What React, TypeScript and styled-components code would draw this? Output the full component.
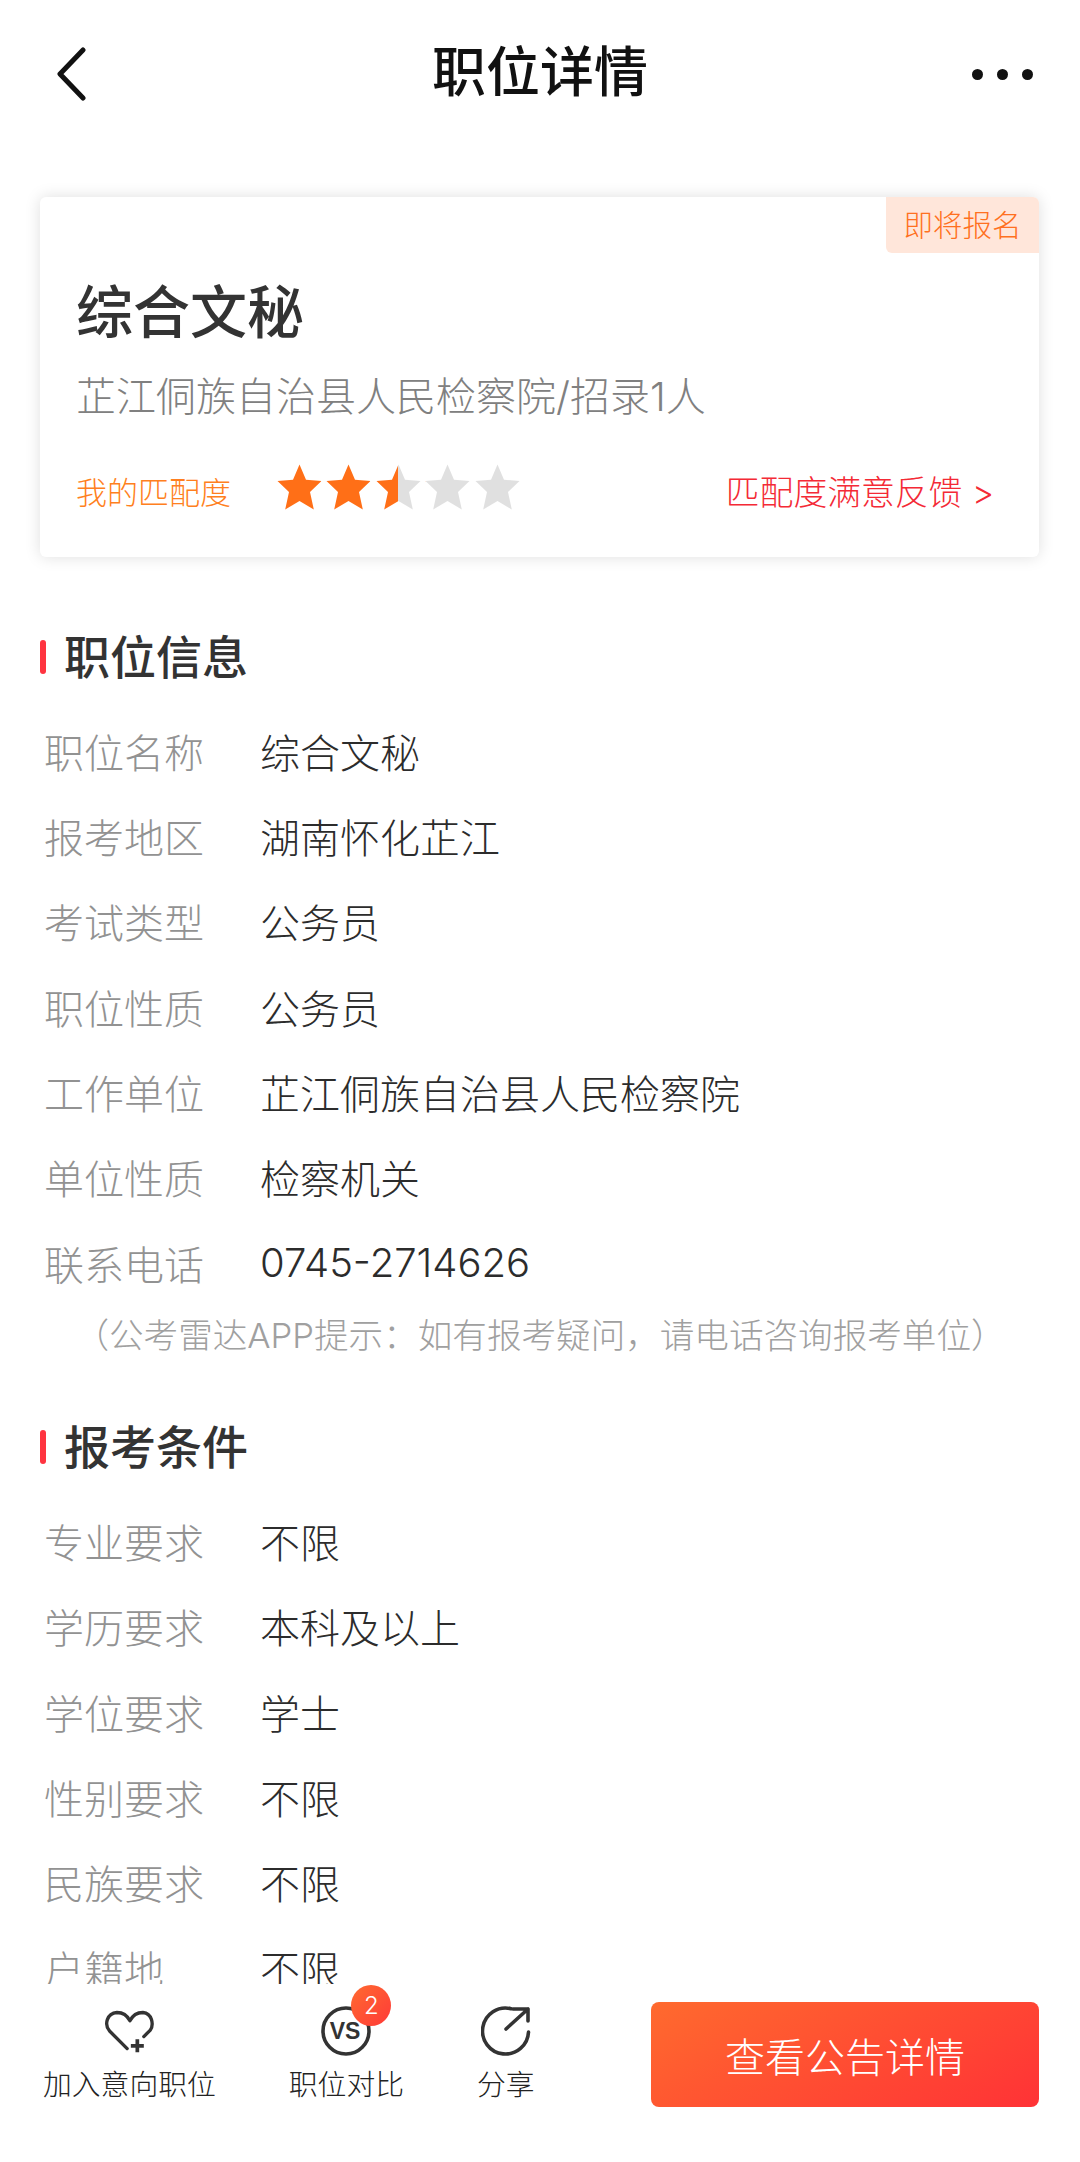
import { FC } from 'react'
import styled, { createGlobalStyle } from 'styled-components'

const FONT = `Inter, "Noto Sans CJK SC", "Noto Sans", sans-serif`

const jobRows = [
  ['职位名称', '综合文秘'],
  ['报考地区', '湖南怀化芷江'],
  ['考试类型', '公务员'],
  ['职位性质', '公务员'],
  ['工作单位', '芷江侗族自治县人民检察院'],
  ['单位性质', '检察机关'],
  ['联系电话', '0745-2714626'],
]

const conditionRows = [
  ['专业要求', '不限'],
  ['学历要求', '本科及以上'],
  ['学位要求', '学士'],
  ['性别要求', '不限'],
  ['民族要求', '不限'],
  ['户籍地', '不限'],
]

const Star: FC<{ id: string; fill: number }> = ({ id, fill }) => (
  <StarIcon viewBox="0 0 45 46">
    <defs>
      <linearGradient id={id} x1="0" x2="1" y1="0" y2="0">
        <stop offset={fill} stopColor="#ff6f17" />
        <stop offset={fill} stopColor="#e0e0e0" />
      </linearGradient>
    </defs>
    <path
      d="M22.5 0.5 L29 15.8 L44.5 17 L33 28 L36.8 45.5 L22.5 37 L8.2 45.5 L12 28 L0.5 17 L16 15.8 Z"
      fill={`url(#${id})`}
    />
  </StarIcon>
)

const InfoList: FC<{ rows: string[][] }> = ({ rows }) => (
  <List>
    {rows.map(([label, value]) => (
      <Row key={label}>
        <RowLabel>{label}</RowLabel>
        <RowValue>{value}</RowValue>
      </Row>
    ))}
  </List>
)

const App: FC = () => (
  <Page>
    <GlobalLayout />
    <Scroller>
      <Nav>
        <NavBack viewBox="0 0 30 54" fill="none">
          <path d="M27 3 L4 27 L27 51" stroke="#111" strokeWidth="5" strokeLinecap="round" strokeLinejoin="round" />
        </NavBack>
        <NavTitle>职位详情</NavTitle>
        <NavMore>
          <Dot />
          <Dot />
          <Dot />
        </NavMore>
      </Nav>

      <Card>
        <Badge>即将报名</Badge>
        <CardTitle>综合文秘</CardTitle>
        <CardSub>芷江侗族自治县人民检察院/招录1人</CardSub>
        <MatchRow>
          <MatchLabel>我的匹配度</MatchLabel>
          <Stars>
            <Star id="s1" fill={1} />
            <Star id="s2" fill={1} />
            <Star id="s3" fill={0.5} />
            <Star id="s4" fill={0} />
            <Star id="s5" fill={0} />
          </Stars>
          <Feedback>匹配度满意反馈 &gt;</Feedback>
        </MatchRow>
      </Card>

      <SectionHead $top={67}>职位信息</SectionHead>
      <InfoList rows={jobRows} />
      <Hint>（公考雷达APP提示：如有报考疑问，请电话咨询报考单位）</Hint>

      <SectionHead $top={59}>报考条件</SectionHead>
      <InfoList rows={conditionRows} />
    </Scroller>

    <Footer>
      <Tool>
        <ToolIcon>
          <svg width="54" height="50" viewBox="0 0 54 50" fill="none" stroke="#333" strokeWidth="3.6" strokeLinecap="round" strokeLinejoin="round">
            <path d="M25 44 L6 25 C0 18 3 6 14 5 C20 5 25 8 28 14 C31 8 36 5 42 5 C52 6 54 18 50 24 L43 31" />
            <path d="M29 41 H43 M36 34 V48" strokeWidth="4" strokeLinecap="butt" />
          </svg>
        </ToolIcon>
        <ToolLabel>加入意向职位</ToolLabel>
      </Tool>
      <Tool>
        <ToolIcon>
          <svg width="50" height="50" viewBox="0 0 50 50" fill="none">
            <circle cx="25" cy="25" r="23" stroke="#333" strokeWidth="3.6" />
            <text x="24" y="33" textAnchor="middle" fontFamily="'Liberation Sans', sans-serif" fontWeight="700" fontSize="23" fill="#333">VS</text>
          </svg>
          <CountBadge>2</CountBadge>
        </ToolIcon>
        <ToolLabel>职位对比</ToolLabel>
      </Tool>
      <Tool>
        <ToolIcon>
          <svg width="50" height="50" viewBox="0 0 50 50" fill="none" stroke="#333" strokeWidth="3.6" strokeLinecap="round" strokeLinejoin="round">
            <path d="M30 2.7 A23 23 0 1 0 47.5 26" />
            <path d="M25 23 L47 3 M32 3 H47 V15" />
          </svg>
        </ToolIcon>
        <ToolLabel>分享</ToolLabel>
      </Tool>
      <ActionButton>查看公告详情</ActionButton>
    </Footer>
  </Page>
)

const GlobalLayout = createGlobalStyle`
  html, body {
    margin: 0;
    background: #fff;
    font-family: ${FONT};
    font-weight: 300;
    overflow: hidden;
  }
`

const Page = styled.div`
  display: flex;
  flex-direction: column;
  width: 1080px;
  height: 2162px;
`

const Scroller = styled.main`
  flex: 1;
  min-height: 0;
  overflow: hidden;
`

const Nav = styled.header`
  display: flex;
  align-items: center;
  justify-content: space-between;
  height: 148px;
  padding: 0 46px 0 56px;
  position: relative;
`

const NavBack = styled.svg`
  width: 30px;
  height: 54px;
`

const NavTitle = styled.h1`
  position: absolute;
  top: 0;
  left: 0;
  right: 0;
  margin: 0;
  line-height: 146px;
  text-align: center;
  font-size: 54px;
  font-weight: 500;
  color: #111;
`

const NavMore = styled.div`
  display: flex;
  gap: 14px;
  margin-right: 1px;
`

const Dot = styled.span`
  width: 11px;
  height: 11px;
  border-radius: 50%;
  background: #111;
`

const Card = styled.section`
  position: relative;
  box-sizing: border-box;
  height: 360px;
  margin: 49px 41px 0 40px;
  padding: 81px 45px 0 36px;
  border-radius: 6px;
  background: #fff;
  box-shadow: 0 0 16px rgba(0, 0, 0, 0.13);
`

const Badge = styled.div`
  position: absolute;
  top: 0;
  right: 0;
  width: 153px;
  height: 56px;
  line-height: 56px;
  text-align: center;
  font-size: 29.5px;
  color: #ff7020;
  background: #ffe6da;
  border-radius: 0 6px 0 6px;
`

const CardTitle = styled.h2`
  margin: 0;
  height: 70px;
  line-height: 70px;
  font-size: 57px;
  font-weight: 500;
  color: #333;
`

const CardSub = styled.div`
  margin-top: 24px;
  height: 50px;
  line-height: 50px;
  font-size: 40px;
  color: #808080;
`

const MatchRow = styled.div`
  display: flex;
  align-items: center;
  margin-top: 43px;
  height: 50px;
`

const MatchLabel = styled.span`
  width: 201px;
  font-size: 31px;
  color: #ff7f20;
`

const Stars = styled.div`
  display: flex;
  gap: 4.4px;
  margin-top: -7px;
`

const StarIcon = styled.svg`
  width: 45px;
  height: 46px;
`

const Feedback = styled.span`
  margin-left: auto;
  font-size: 33.8px;
  color: #f42a36;
`

const SectionHead = styled.h3<{ $top: number }>`
  display: flex;
  align-items: center;
  gap: 18px;
  margin: ${p => p.$top}px 0 24px 40px;
  height: 60px;
  font-size: 46px;
  font-weight: 500;
  color: #333;

  &::before {
    content: '';
    width: 6px;
    height: 34px;
    margin-top: 5px;
    border-radius: 3px;
    background: #ff3440;
  }
`

const List = styled.div`
  display: flex;
  flex-direction: column;
`

const Row = styled.div`
  display: flex;
  align-items: center;
  height: 85.33px;
  padding-left: 44px;
  font-size: 40px;
`

const RowLabel = styled.span`
  width: 216px;
  flex-shrink: 0;
  color: #929292;
`

const RowValue = styled.span`
  color: #2c2c2c;
`

const Hint = styled.div`
  margin-top: 10px;
  height: 40px;
  line-height: 40px;
  text-align: center;
  font-size: 34.6px;
  color: #a0a0a0;
`

const Footer = styled.footer`
  display: flex;
  flex-shrink: 0;
  gap: 73px;
  box-sizing: border-box;
  height: 178px;
  padding: 0 41px 0 43px;
  background: #fff;
`

const Tool = styled.div`
  display: flex;
  flex-direction: column;
  align-items: center;
  padding-top: 22px;
`

const ToolIcon = styled.div`
  position: relative;
  display: flex;
  justify-content: center;
  width: 50px;
  height: 50px;
`

const CountBadge = styled.span`
  position: absolute;
  top: -21px;
  left: 30px;
  width: 40px;
  height: 41px;
  line-height: 41px;
  text-align: center;
  border-radius: 50%;
  font-size: 24px;
  color: #fff;
  background: linear-gradient(135deg, #ff6a30, #ff3a38);
`

const ToolLabel = styled.span`
  margin-top: 9px;
  line-height: 40px;
  font-size: 28.8px;
  color: #222;
  white-space: nowrap;
`

const ActionButton = styled.button`
  margin: 18px 0 0 auto;
  width: 388px;
  height: 105px;
  border: 0;
  border-radius: 8px;
  font-family: ${FONT};
  font-size: 40px;
  font-weight: 300;
  color: #fff;
  background: linear-gradient(150deg, #ff6a2e, #ff3236);
`

export default App
